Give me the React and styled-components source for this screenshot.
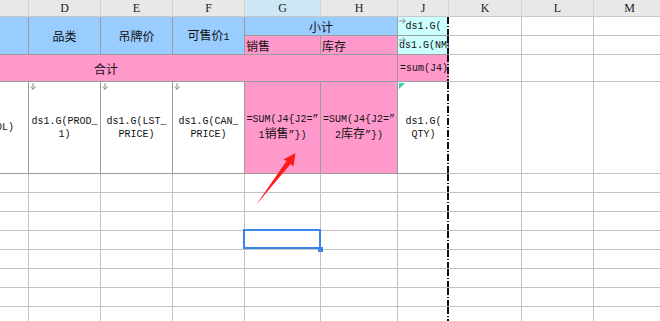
import React from 'react';
import styled, { createGlobalStyle, css } from 'styled-components';

const GlobalStyle = createGlobalStyle`
  html, body {
    margin: 0;
    padding: 0;
    background: #fff;
    overflow: hidden;
  }
  body {
    font-family: "Liberation Mono", "Noto Sans CJK SC", monospace;
  }
`;

const COLS = [29, 72, 72, 72, 76, 77, 51, 73, 72, 72];
const ROWS = [17, 19, 19, 27, 92, 19, 19, 19, 19, 19, 19, 19, 19];
const LETTERS = ['', 'D', 'E', 'F', 'G', 'H', 'J', 'K', 'L', 'M'];

const FILLS = {
  white: '#ffffff',
  blue: '#99ccff',
  pink: '#ff99cc',
  cyan: '#ccffff',
};

const Sheet = styled.div`
  position: relative;
  width: 660px;
  height: 321px;
  overflow: hidden;
`;

const Grid = styled.div`
  display: grid;
  grid-template-columns: ${COLS.map((c) => `${c}px`).join(' ')};
  grid-template-rows: ${ROWS.map((r) => `${r}px`).join(' ')};
`;

const Head = styled.div`
  grid-row: 1;
  display: flex;
  align-items: center;
  justify-content: center;
  box-sizing: border-box;
  background: ${(p) => (p.$active ? '#cde7f5' : '#e8e8e8')};
  border-right: 1px solid #d3d3d3;
  border-bottom: 1px solid #c8c8c8;
  font-family: "Liberation Serif", serif;
  font-size: 12px;
  color: #222;
`;

const Cell = styled.div`
  grid-column: ${(p) => p.$col} / span ${(p) => p.$span || 1};
  grid-row: ${(p) => p.$row} / span ${(p) => p.$rows || 1};
  position: relative;
  display: flex;
  align-items: center;
  justify-content: ${(p) => (p.$left ? 'flex-start' : 'center')};
  padding: 0 ${(p) => (p.$pad != null ? p.$pad : 2)}px;
  box-sizing: border-box;
  overflow: hidden;
  white-space: nowrap;
  background-color: ${(p) => FILLS[p.$fill || 'white']};
  border-right: 1px solid ${(p) => (p.$tpl ? '#9c9c9c' : '#c2c2c2')};
  border-bottom: 1px solid ${(p) => (p.$tpl ? '#9c9c9c' : '#c2c2c2')};
  font-size: 10px;
  line-height: 13px;
  color: #111;

  ${(p) =>
    p.$pageBreak &&
    css`
      border-right: none;
      background-image: repeating-linear-gradient(
        to bottom,
        #111 0 7px,
        transparent 7px 9px,
        #111 9px 10px,
        transparent 10px 12px
      );
      background-size: 2px 100%;
      background-repeat: no-repeat;
      background-position: right top;
    `}

  ${(p) =>
    p.$selected &&
    css`
      overflow: visible;
      z-index: 2;
      &::before {
        content: '';
        position: absolute;
        top: -2px;
        left: -2px;
        right: -1px;
        bottom: 0;
        border: 2px solid #3a86e8;
      }
      &::after {
        content: '';
        position: absolute;
        right: -3px;
        bottom: -3px;
        width: 5px;
        height: 5px;
        background: #3a86e8;
      }
    `}
`;

const Lines = styled.div`
  text-align: center;
  line-height: 13px;
`;

const Han = styled.span`
  font-family: "Noto Sans CJK SC", sans-serif;
  font-size: 12px;
`;

const Clip = styled.span`
  margin-left: -4px;
`;

const Marker = styled.svg`
  position: absolute;
  top: 1px;
  left: 1px;
`;

const Annotation = styled.svg`
  position: absolute;
  top: 0;
  left: 0;
  pointer-events: none;
  z-index: 3;
`;

const DownMark = () => (
  <Marker width="6" height="7" viewBox="0 0 6 7">
    <path d="M3 0v6M0.5 3.5L3 6.5L5.5 3.5" stroke="#8a8a8a" strokeWidth="1" fill="none" />
  </Marker>
);

const RightMark = () => (
  <Marker width="7" height="6" viewBox="0 0 7 6">
    <path d="M0 3h6M3.5 0.5L6.5 3L3.5 5.5" stroke="#8a8a8a" strokeWidth="1" fill="none" />
  </Marker>
);

const TealMark = () => (
  <Marker width="6" height="6" viewBox="0 0 6 6">
    <path d="M0 0h6L0 6z" fill="#2fd1a4" />
  </Marker>
);

// plain white grid below the template rows
const dataRows = [];
for (let r = 6; r <= ROWS.length; r++) {
  for (let c = 1; c <= COLS.length; c++) {
    dataRows.push(
      <Cell
        key={`${r}-${c}`}
        $row={r}
        $col={c}
        $pageBreak={c === 7}
        $selected={r === 9 && c === 5}
      />
    );
  }
}

const sideCells = (row, rows = 1) =>
  [8, 9, 10].map((c) => <Cell key={`s${row}-${c}`} $row={row} $rows={rows} $col={c} />);

export default function App() {
  return (
    <Sheet>
      <GlobalStyle />
      <Grid>
        {LETTERS.map((l, i) => (
          <Head key={i} $active={l === 'G'}>
            {l}
          </Head>
        ))}

        {/* title rows */}
        <Cell $row={2} $rows={2} $col={1} $fill="blue" $tpl />
        <Cell $row={2} $rows={2} $col={2} $fill="blue" $tpl>
          <Han>品类</Han>
        </Cell>
        <Cell $row={2} $rows={2} $col={3} $fill="blue" $tpl>
          <Han>吊牌价</Han>
        </Cell>
        <Cell $row={2} $rows={2} $col={4} $fill="blue" $tpl>
          <Lines>
            <Han>可售价</Han>1
          </Lines>
        </Cell>
        <Cell $row={2} $col={5} $span={2} $fill="blue" $tpl>
          <Han>小计</Han>
        </Cell>
        <Cell $row={2} $col={7} $fill="cyan" $tpl $pageBreak>
          <RightMark />
          ds1.G(
        </Cell>
        {sideCells(2)}

        <Cell $row={3} $col={5} $fill="pink" $tpl $left $pad={1}>
          <Han>销售</Han>
        </Cell>
        <Cell $row={3} $col={6} $fill="pink" $tpl $left $pad={1}>
          <Han>库存</Han>
        </Cell>
        <Cell $row={3} $col={7} $fill="cyan" $tpl $pageBreak $left $pad={1}>
          <RightMark />
          ds1.G(NMN
        </Cell>
        {sideCells(3)}

        {/* total row */}
        <Cell $row={4} $col={1} $span={6} $fill="pink" $tpl $left $pad={94}>
          <Han>合计</Han>
        </Cell>
        <Cell $row={4} $col={7} $fill="pink" $tpl $pageBreak $left $pad={2}>
          =sum(J4)
        </Cell>
        {sideCells(4)}

        {/* detail row */}
        <Cell $row={5} $col={1} $tpl $left $pad={0}>
          <Clip>OL)</Clip>
        </Cell>
        <Cell $row={5} $col={2} $tpl>
          <DownMark />
          <Lines>
            ds1.G(PROD_
            <br />
            1)
          </Lines>
        </Cell>
        <Cell $row={5} $col={3} $tpl>
          <DownMark />
          <Lines>
            ds1.G(LST_
            <br />
            PRICE)
          </Lines>
        </Cell>
        <Cell $row={5} $col={4} $tpl>
          <DownMark />
          <Lines>
            ds1.G(CAN_
            <br />
            PRICE)
          </Lines>
        </Cell>
        <Cell $row={5} $col={5} $fill="pink" $tpl>
          <Lines>
            =SUM(J4{'{'}J2=”
            <br />
            1<Han>销售</Han>”{'}'})
          </Lines>
        </Cell>
        <Cell $row={5} $col={6} $fill="pink" $tpl>
          <Lines>
            =SUM(J4{'{'}J2=”
            <br />
            2<Han>库存</Han>”{'}'})
          </Lines>
        </Cell>
        <Cell $row={5} $col={7} $tpl $pageBreak>
          <TealMark />
          <Lines>
            ds1.G(
            <br />
            QTY)
          </Lines>
        </Cell>
        {sideCells(5)}

        {dataRows}
      </Grid>

      <Annotation width="660" height="321" viewBox="0 0 660 321">
        <polygon
          points="256,205 286.5,161 283.5,159.5 295.5,153 293.5,166.5 290.5,164"
          fill="#ff1a1a"
        />
      </Annotation>
    </Sheet>
  );
}
